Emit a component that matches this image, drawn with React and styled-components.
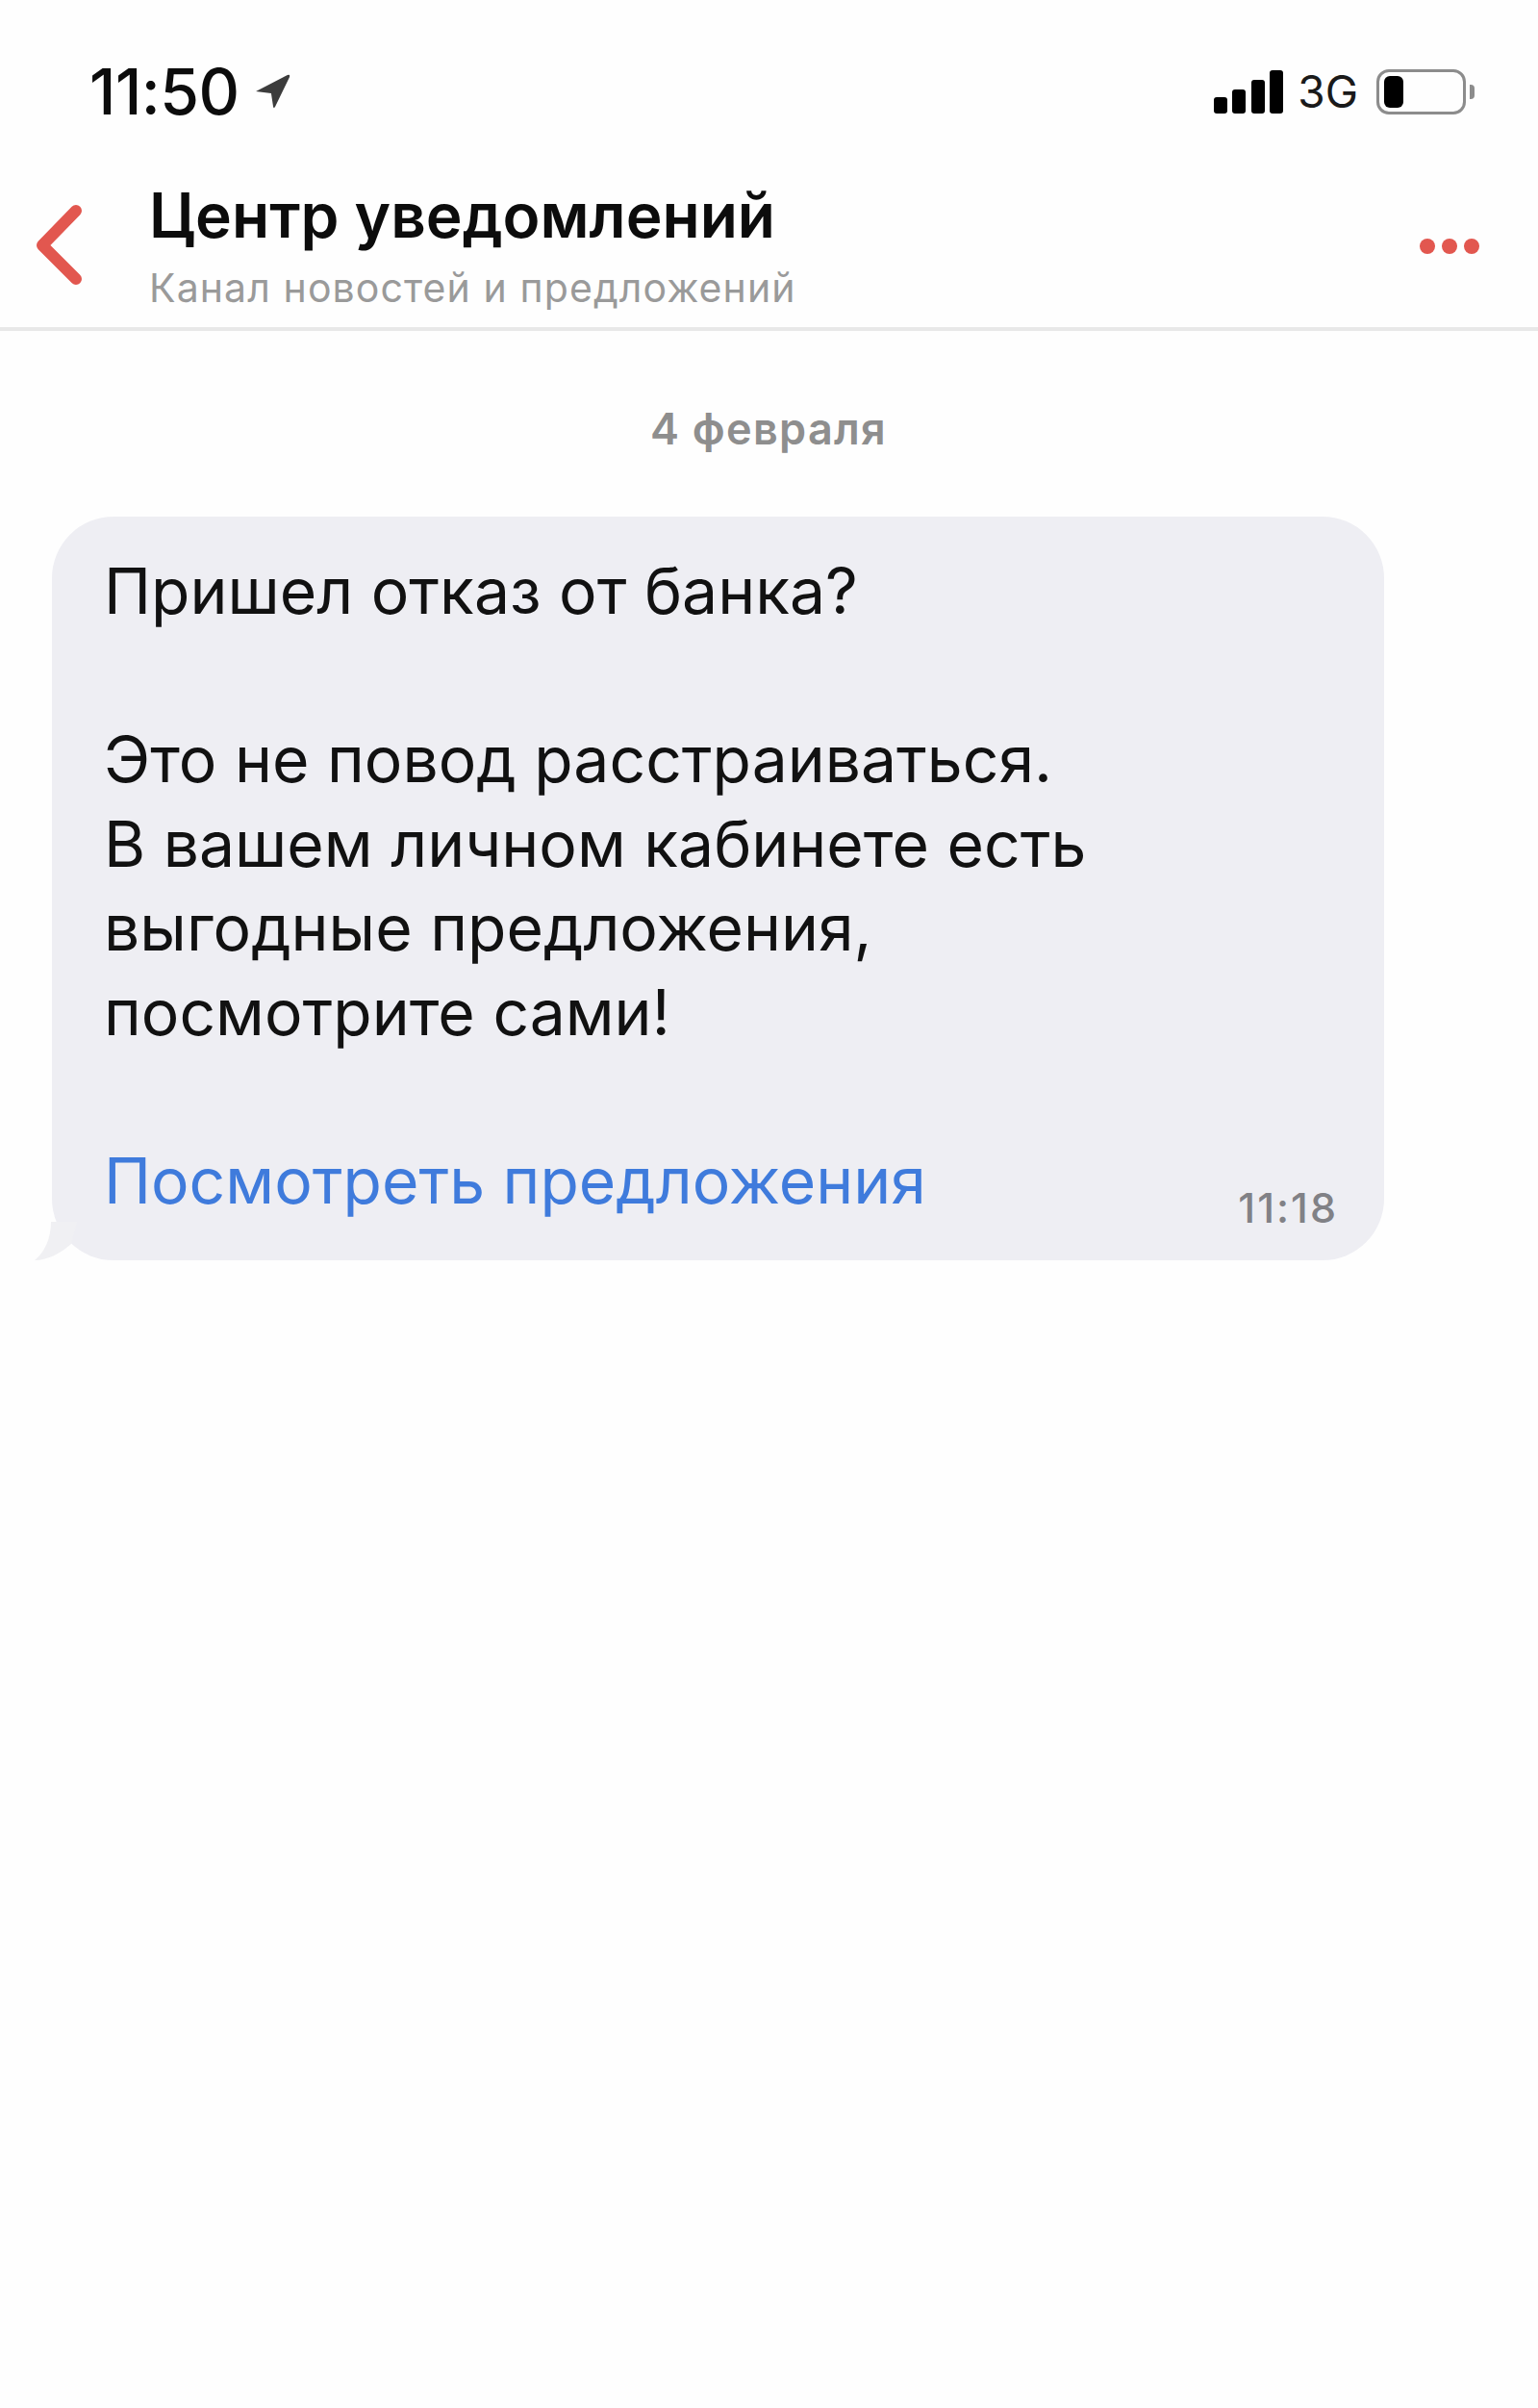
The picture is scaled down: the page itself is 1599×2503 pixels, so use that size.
import React from "react";
import styled, { createGlobalStyle } from "styled-components";

const GlobalStyle = createGlobalStyle`
  html, body {
    margin: 0;
    padding: 0;
    background-color: #fefefe;
  }
`;

const Page = styled.div`
  display: flex;
  flex-direction: column;
  width: 1599px;
  height: 2503px;
  background-color: #fefefe;
  font-family: Inter, "Liberation Sans", sans-serif;
  overflow: hidden;
`;

const StatusBar = styled.div`
  display: flex;
  justify-content: space-between;
  align-items: center;
  height: 190px;
  box-sizing: border-box;
  padding: 0 66px 0 93px;
`;

const StatusGroup = styled.div`
  display: flex;
  align-items: center;
  gap: ${({ $gap }) => $gap}px;
`;

const Clock = styled.div`
  font-size: 66px;
  font-weight: 500;
  letter-spacing: -0.5px;
  line-height: 72px;
  color: #0c0c0c;
`;

const Network = styled.div`
  margin-right: 4px;
  font-size: 46px;
  font-weight: 400;
  line-height: 56px;
  color: #1a1a1a;
`;

const Battery = styled.div`
  display: flex;
  align-items: center;
  gap: 4px;
`;

const BatteryBody = styled.div`
  display: flex;
  align-items: center;
  box-sizing: border-box;
  width: 93px;
  height: 47px;
  padding: 0 5px;
  border: 3px solid #8c8c8c;
  border-radius: 13px;
`;

const BatteryLevel = styled.div`
  width: 20px;
  height: 33px;
  border-radius: 6px;
  background-color: #000;
`;

const BatteryNub = styled.div`
  width: 5px;
  height: 15px;
  border-radius: 0 4px 4px 0;
  background-color: #8c8c8c;
`;

const Header = styled.div`
  display: flex;
  align-items: center;
  height: 154px;
  box-sizing: border-box;
  padding: 0 61px 0 34px;
  border-bottom: 4px solid #e8e8e8;
`;

const BackButton = styled.div`
  display: flex;
  width: 121px;
  flex-shrink: 0;
  margin-top: -20px;
`;

const HeaderText = styled.div`
  flex: 1;
  display: flex;
  flex-direction: column;
  margin-top: -21px;
`;

const Title = styled.div`
  font-size: 64px;
  font-weight: 600;
  line-height: 78px;
  color: #0c0c0c;
`;

const Subtitle = styled.div`
  margin-top: 11px;
  font-size: 41px;
  font-weight: 400;
  letter-spacing: 1.1px;
  line-height: 50px;
  color: #9a9a9a;
`;

const MoreButton = styled.div`
  display: flex;
  gap: 7px;
  margin-top: -18px;
`;

const Dot = styled.div`
  width: 16px;
  height: 16px;
  border-radius: 50%;
  background-color: #e2574f;
`;

const Feed = styled.div`
  display: flex;
  flex-direction: column;
  padding: 72px 0 0 54px;
`;

const DateLabel = styled.div`
  width: 1490px;
  text-align: center;
  font-size: 45px;
  font-weight: 600;
  letter-spacing: 1.3px;
  line-height: 60px;
  color: #8e8e8e;
`;

const Bubble = styled.div`
  position: relative;
  width: 1385px;
  height: 773px;
  margin-top: 61px;
  box-sizing: border-box;
  padding: 34px 48px 0 54px;
  border-radius: 64px;
  background-color: #eeeef3;
`;

const BubbleTail = styled.svg`
  position: absolute;
  left: -18px;
  bottom: 0;
`;

const MessageLine = styled.div`
  min-height: 87.6px;
  font-size: 66px;
  font-weight: 400;
  line-height: 87.6px;
  color: #111;
`;

const BubbleFooter = styled.div`
  display: flex;
  justify-content: space-between;
  align-items: flex-end;
`;

const OfferLink = styled.a`
  font-size: 66px;
  font-weight: 400;
  line-height: 87.6px;
  color: #3f7bdc;
`;

const MessageTime = styled.div`
  margin-bottom: -8px;
  font-size: 43px;
  font-weight: 500;
  letter-spacing: 2px;
  line-height: 50px;
  color: #818186;
`;

const LocationArrow = () => (
  <svg width="37" height="36" viewBox="0 0 35 34">
    <path d="M1 17 L32 1 Q35 0 34 3 L20 32 Q18.5 34.5 18 32 L16 19 Z" fill="#3c3c3c" />
  </svg>
);

const SignalBars = () => (
  <svg width="72" height="45" viewBox="0 0 72 45" fill="#000">
    <rect x="0" y="28" width="14" height="17" rx="3" />
    <rect x="19" y="20" width="14" height="25" rx="3" />
    <rect x="39" y="10" width="14" height="35" rx="3" />
    <rect x="58" y="0" width="14" height="45" rx="3" />
  </svg>
);

const BackChevron = () => (
  <svg width="52" height="88" viewBox="0 0 52 88" fill="none">
    <path d="M45 8 L10 44 L45 79" stroke="#e2574f" strokeWidth="12" strokeLinecap="round" strokeLinejoin="round" />
  </svg>
);

const messageLines = [
  "Пришел отказ от банка?",
  "",
  "Это не повод расстраиваться.",
  "В вашем личном кабинете есть",
  "выгодные предложения,",
  "посмотрите сами!",
  "",
];

const App = () => {
  return (
    <Page>
      <GlobalStyle />
      <StatusBar>
        <StatusGroup $gap={16}>
          <Clock>11:50</Clock>
          <LocationArrow />
        </StatusGroup>
        <StatusGroup $gap={15}>
          <SignalBars />
          <Network>3G</Network>
          <Battery>
            <BatteryBody>
              <BatteryLevel />
            </BatteryBody>
            <BatteryNub />
          </Battery>
        </StatusGroup>
      </StatusBar>
      <Header>
        <BackButton>
          <BackChevron />
        </BackButton>
        <HeaderText>
          <Title>Центр уведомлений</Title>
          <Subtitle>Канал новостей и предложений</Subtitle>
        </HeaderText>
        <MoreButton>
          <Dot />
          <Dot />
          <Dot />
        </MoreButton>
      </Header>
      <Feed>
        <DateLabel>4 февраля</DateLabel>
        <Bubble>
          <BubbleTail width="44" height="40" viewBox="0 0 44 40">
            <path d="M17 0 C17 18 10 32 0 40 C14 40 28 32 38 23 L44 0 Z" fill="#f0f0f3" />
          </BubbleTail>
          {messageLines.map((line, index) => (
            <MessageLine key={index}>{line}</MessageLine>
          ))}
          <BubbleFooter>
            <OfferLink>Посмотреть предложения</OfferLink>
            <MessageTime>11:18</MessageTime>
          </BubbleFooter>
        </Bubble>
      </Feed>
    </Page>
  );
};

export default App;
